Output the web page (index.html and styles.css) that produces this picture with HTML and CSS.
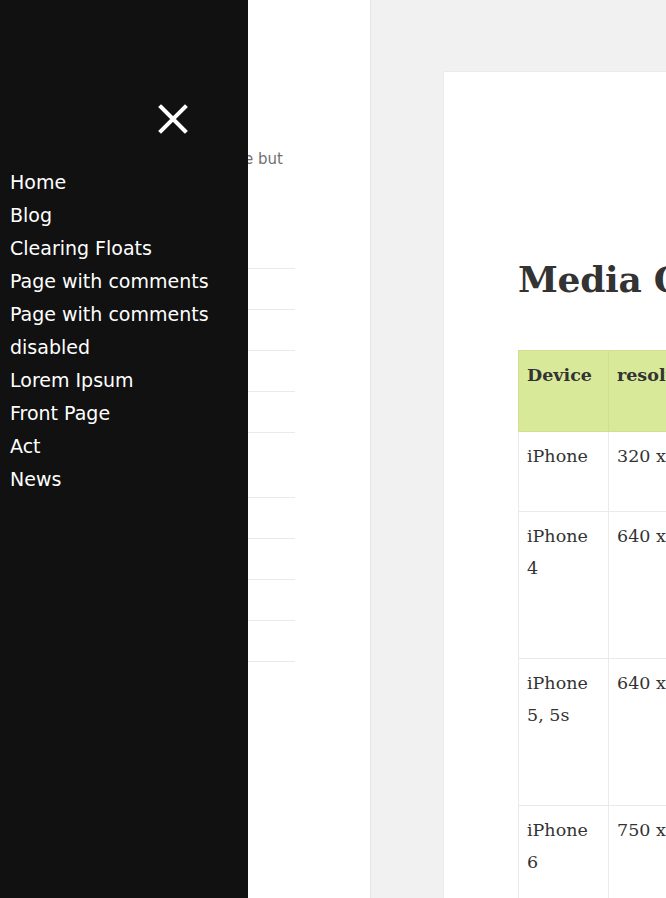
FILE: index.html
```html
<!DOCTYPE html>
<html lang="en">
<head>
<meta charset="utf-8">
<title>Media Queries</title>
<link rel="stylesheet" href="styles.css">
</head>
<body>
<div class="page">
  <aside class="sidebar">
    <div class="sidebar-inner">
      <p class="site-desc">A theme site, simple but</p>
      <ul class="widget-list">
        <li>Hello world!</li>
        <li>HTML Tags</li>
        <li>Sticky</li>
        <li>Gallery</li>
        <li class="tall">Post Format: Standard</li>
        <li>Media Queries</li>
        <li>Lorem Ipsum</li>
        <li>Page Image</li>
        <li>Front Page</li>
      </ul>
    </div>
  </aside>
  <main class="main">
    <article class="entry">
      <h1 class="entry-title">Media Queries</h1>
      <table class="data-table">
        <thead>
          <tr class="row-head">
            <th class="col-device">Device</th>
            <th class="col-res">resolution</th>
            <th>device-width / device-height (px)</th>
          </tr>
        </thead>
        <tbody>
          <tr class="row-short">
            <td>iPhone</td>
            <td>320 x 480</td>
            <td>320 x 480</td>
          </tr>
          <tr class="row-tall">
            <td>iPhone 4</td>
            <td>640 x 960</td>
            <td>320 x 480 in both portrait and landscape mode. device-pixel-ratio is 2</td>
          </tr>
          <tr class="row-tall">
            <td>iPhone 5, 5s</td>
            <td>640 x 1136</td>
            <td>320 x 568 in both portrait and landscape mode. device-pixel-ratio is 2</td>
          </tr>
          <tr class="row-tall">
            <td>iPhone 6</td>
            <td>750 x 1334</td>
            <td>375 x 667 in both portrait and landscape mode. device-pixel-ratio is 2</td>
          </tr>
        </tbody>
      </table>
    </article>
  </main>
</div>

<nav class="menu-panel">
  <button class="menu-close" aria-label="Close menu">
    <svg width="30" height="30" viewBox="0 0 30 30" aria-hidden="true">
      <path d="M3 3 L27 27 M27 3 L3 27" stroke="#fff" stroke-width="4" stroke-linecap="square" fill="none"/>
    </svg>
  </button>
  <ul class="menu-list">
    <li><a href="#">Home</a></li>
    <li><a href="#">Blog</a></li>
    <li><a href="#">Clearing Floats</a></li>
    <li><a href="#">Page with comments</a></li>
    <li><a href="#">Page with comments disabled</a></li>
    <li><a href="#">Lorem Ipsum</a></li>
    <li><a href="#">Front Page</a></li>
    <li><a href="#">Act</a></li>
    <li><a href="#">News</a></li>
  </ul>
</nav>
</body>
</html>
```

FILE: styles.css
```css
html, body {
  margin: 0;
  padding: 0;
}

body {
  width: 666px;
  height: 898px;
  overflow: hidden;
  background: #f1f1f1;
  font-family: "DejaVu Sans", sans-serif;
  color: #333;
}

.page {
  display: flex;
  width: 1400px;
  min-height: 898px;
}

/* Left sidebar (mostly covered by the menu panel) */
.sidebar {
  flex: none;
  width: 370px;
  background: #fff;
  border-right: 1px solid #e5e5e5;
}

.sidebar-inner {
  margin-left: 40px;
  width: 255px;
  padding-top: 147px;
}

.site-desc {
  margin: 0;
  padding-right: 12px;
  text-align: right;
  white-space: nowrap;
  font-size: 15px;
  line-height: 24px;
  color: #707070;
}

.widget-list {
  list-style: none;
  margin: 97px 0 0;
  padding: 0;
  border-bottom: 1px solid #eaeaea;
  font-size: 15px;
  color: #333;
}

.widget-list li {
  border-top: 1px solid #eaeaea;
  height: 24px;
  padding: 8px 90px 8px 0;
  overflow: hidden;
  line-height: 24px;
}

.widget-list li.tall {
  height: 48px;
}

/* Main content */
.main {
  flex: none;
  padding: 72px 0 0 73px;
}

.entry {
  width: 800px;
  min-height: 900px;
  background: #fff;
  box-shadow: 0 0 1px rgba(0, 0, 0, 0.15);
  padding: 185px 0 0 74px;
  font-family: "DejaVu Serif", serif;
}

.entry-title {
  margin: 0;
  font-size: 36px;
  line-height: 45px;
  font-weight: 700;
  letter-spacing: -0.3px;
  color: #333;
  white-space: nowrap;
}

.data-table {
  margin-top: 48px;
  border-collapse: collapse;
  border-spacing: 0;
  table-layout: fixed;
  width: 700px;
  font-size: 17.5px;
  line-height: 32px;
  color: #333;
}

.data-table th,
.data-table td {
  border: 1px solid #eaeaea;
  padding: 8px;
  vertical-align: top;
  text-align: left;
}

.data-table th {
  background: #d9e99a;
  border-color: #cfdf8e;
  font-weight: 700;
}

.data-table .col-device {
  width: 73px;
}

.data-table .col-res {
  width: 160px;
}

.row-head {
  height: 81px;
}

.row-short {
  height: 80px;
}

.row-tall {
  height: 147px;
}

/* Overlay menu panel */
.menu-panel {
  position: fixed;
  left: 0;
  top: 0;
  width: 248px;
  height: 100%;
  background: #111;
  display: flex;
  flex-direction: column;
}

.menu-close {
  align-self: flex-start;
  margin: 104px 0 0 158px;
  padding: 0;
  border: 0;
  background: none;
  width: 30px;
  height: 30px;
  display: block;
  cursor: pointer;
}

.menu-close svg {
  display: block;
}

.menu-list {
  list-style: none;
  margin: 32px 0 0;
  padding: 0 0 0 10px;
  font-family: "DejaVu Sans", sans-serif;
  font-size: 19px;
  line-height: 33px;
}

.menu-list a {
  color: #fff;
  text-decoration: none;
}
```
